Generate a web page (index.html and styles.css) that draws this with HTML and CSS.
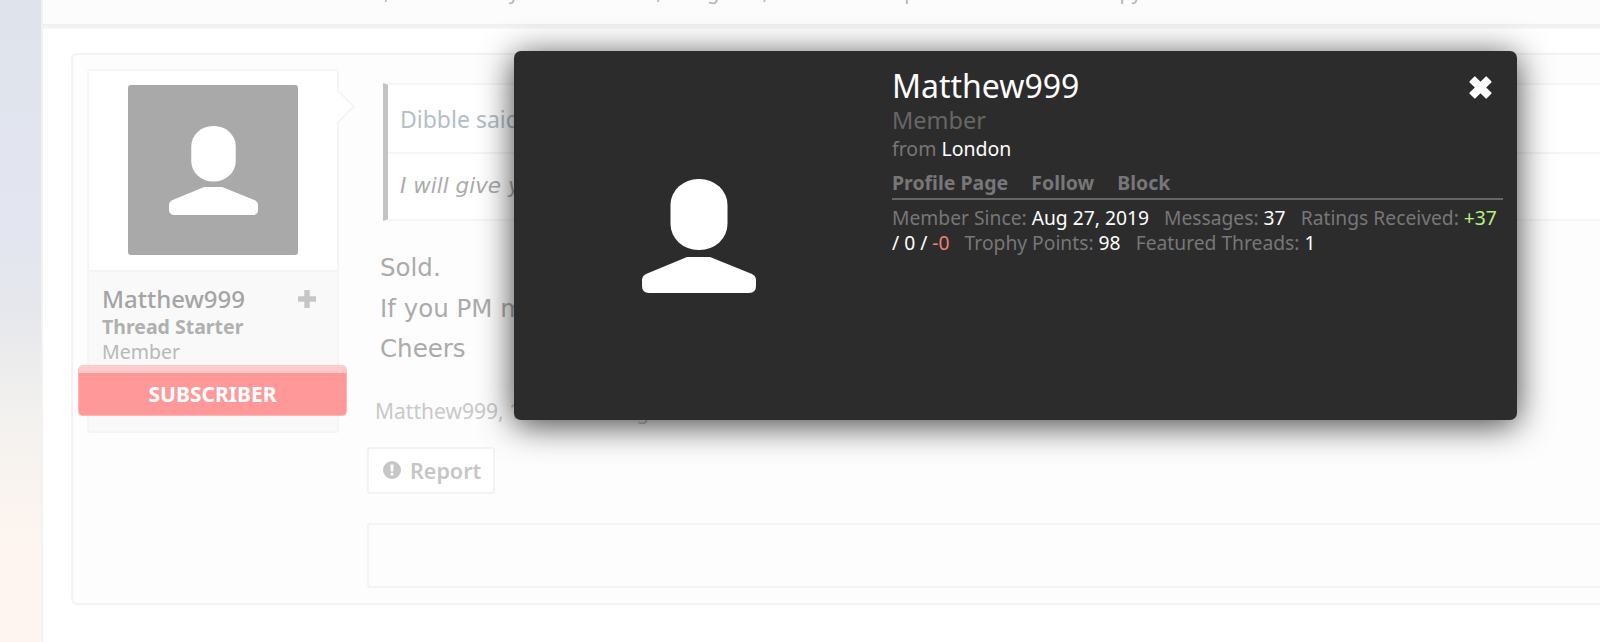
FILE: index.html
```html
<!DOCTYPE html>
<html lang="en">
  <head>
    <meta charset="UTF-8" />
    <title>Matthew999 - Thread</title>
    <link rel="stylesheet" href="styles.css">
  </head>
  <body>
    <svg class="icon-defs" width="0" height="0">
      <symbol id="person" viewBox="0 0 114 114">
        <rect x="28.5" y="0" width="57" height="71" rx="28" ry="26" />
        <path d="M45 78 H68 L110 95 Q114 97 114 101 V107 Q114 114 107 114 H7 Q0 114 0 107 V101 Q0 97 4 95 Z" />
      </symbol>
    </svg>

    <div class="page">
      <div class="gutter"></div>

      <div class="main">
        <div class="topbar"><p>Discussion in Gear For Sale, started by Matthew999, Aug 27, 2019 - Replies - Views - Copy</p></div>
        <div class="band"></div>

        <!-- Post -->
        <div class="panel">
          <div class="sidebar">
            <div class="avatar-wrap">
              <div class="avatar"><svg class="avatar-icon"><use href="#person" /></svg></div>
            </div>
            <div class="user-info">
              <div class="user-name">
                <span>Matthew999</span>
                <svg class="plus" viewBox="0 0 18 18"><path d="M6.3 0 H11.7 V6.3 H18 V11.7 H11.7 V18 H6.3 V11.7 H0 V6.3 H6.3 Z" /></svg>
              </div>
              <div class="user-starter">Thread Starter</div>
              <div class="user-role">Member</div>
            </div>
            <div class="subscriber">SUBSCRIBER</div>
            <div class="sidebar-end"></div>
          </div>

          <div class="post">
            <div class="quote">
              <div class="quote-head">Dibble said:</div>
              <div class="quote-body">I will give you</div>
            </div>
            <div class="message">
              <p>Sold.</p>
              <p>If you PM me</p>
              <p>Cheers</p>
            </div>
            <div class="post-date">Matthew999, 10 minutes ago</div>
            <div class="report">
              <svg class="report-icon" viewBox="0 0 18 18">
                <path fill-rule="evenodd" d="M9 0 A9 9 0 1 1 9 18 A9 9 0 1 1 9 0 Z M7.4 3.5 L7.8 10.5 H10.2 L10.6 3.5 Z M9 11.6 A1.6 1.6 0 1 0 9 14.8 A1.6 1.6 0 1 0 9 11.6 Z" />
              </svg>
              Report
            </div>
            <div class="reply-box"></div>
          </div>
        </div>
      </div>
    </div>

    <!-- Member overlay -->
    <div class="modal">
      <div class="modal-avatar"><svg class="modal-icon"><use href="#person" /></svg></div>
      <div class="modal-info">
        <h1>Matthew999</h1>
        <div class="modal-role">Member</div>
        <div class="modal-from">from <span class="val">London</span></div>
        <div class="modal-links">
          <span>Profile Page</span>
          <span>Follow</span>
          <span>Block</span>
        </div>
        <div class="modal-stats">
          <span class="stat">Member Since: <span class="val">Aug 27, 2019</span></span>
          <span class="stat">Messages: <span class="val">37</span></span>
          <span class="stat">Ratings Received: <span class="pos">+37</span> <span class="val">/ 0 /</span> <span class="neg">-0</span></span>
          <span class="stat">Trophy Points: <span class="val">98</span></span>
          <span class="stat">Featured Threads: <span class="val">1</span></span>
        </div>
      </div>
      <svg class="close" viewBox="0 0 22 22"><path d="M6 2 L11 7 L16 2 L20 6 L15 11 L20 16 L16 20 L11 15 L6 20 L2 16 L7 11 L2 6 Z" /></svg>
    </div>
  </body>
</html>
```

FILE: styles.css
```css
/* General Styles */
body {
  font-family: "Noto Sans", "Open Sans", sans-serif;
  margin: 0;
  padding: 0;
  background-color: #fff;
  overflow: hidden;
}

p {
  margin: 0;
}

.icon-defs {
  position: absolute;
}

.page {
  display: flex;
  height: 642px;
  overflow: hidden;
}

.gutter {
  width: 41px;
  flex-shrink: 0;
  border-right: 2px solid #f2f2f2;
  background: linear-gradient(#dfe3ec 0, #e3e6f0 36%, #e6e7ec 48%, #f4f2ef 66%, #fef5f0 85%, #fef5f0 100%);
}

.main {
  flex: 1;
  min-width: 0;
}

/* Top bar */
.topbar {
  height: 24px;
  background-color: #fcfcfc;
  overflow: hidden;
  white-space: nowrap;
}

.topbar p {
  margin-top: -22px;
  padding-left: 28px;
  font-size: 20px;
  line-height: 28px;
  word-spacing: 15px;
  color: #b5b5b5;
}

.band {
  height: 5px;
  background: linear-gradient(#efefef, #f7f7f7);
}

/* Panel */
.panel {
  display: flex;
  height: 519px;
  margin: 24px -20px 0 28px;
  padding: 14px 15px 15px 14px;
  background-color: #fdfdfd;
  border: 2px solid #f3f3f3;
  border-radius: 6px;
}

/* Sidebar */
.sidebar {
  position: relative;
  width: 248px;
  height: 360px;
  flex-shrink: 0;
  border: 2px solid #f5f5f5;
  border-radius: 3px;
  background-color: #f9f9f9;
}

.sidebar::after {
  content: "";
  position: absolute;
  top: 23px;
  right: -13px;
  width: 23px;
  height: 23px;
  background-color: #fff;
  border-top: 2px solid #f5f5f5;
  border-right: 2px solid #f5f5f5;
  transform: rotate(45deg);
}

.avatar-wrap {
  display: flex;
  justify-content: center;
  padding: 14px 0 15px;
  background-color: #fff;
  border-bottom: 2px solid #f3f3f3;
}

.avatar {
  display: flex;
  align-items: center;
  justify-content: center;
  width: 170px;
  height: 170px;
  background-color: #a9a9a9;
  border-radius: 3px;
}

.avatar-icon {
  width: 89px;
  height: 89px;
  fill: #fff;
}

.user-info {
  height: 93px;
  padding: 0 13px;
}

.user-name {
  display: flex;
  justify-content: space-between;
  align-items: center;
  padding-top: 11px;
  font-size: 24px;
  font-weight: 500;
  line-height: 31px;
  color: #a4a4a4;
}

.plus {
  width: 18px;
  height: 18px;
  margin-right: 8px;
  fill: #c6c6c6;
}

.user-starter {
  font-size: 19.5px;
  font-weight: 700;
  line-height: 25px;
  color: #b0b0b0;
}

.user-role {
  font-size: 19.5px;
  line-height: 25px;
  color: #b8b8b8;
}

.subscriber {
  position: relative;
  margin: 0 -10px 0 -11px;
  height: 42px;
  border: 1px solid #ffb5b5;
  border-top: 8px solid #ffcaca;
  border-radius: 5px;
  background-color: #ff9999;
  color: #fff;
  font-size: 21px;
  font-weight: 700;
  line-height: 42px;
  text-align: center;
}

.sidebar-end {
  height: 15px;
}

/* Post */
.post {
  flex: 1;
  margin-left: 28px;
  min-width: 0;
}

.quote {
  margin: 14px 0 0 16px;
  border: 2px solid #f5f5f5;
  border-left: 5px solid #c4c4c4;
  background-color: #fff;
}

.quote-head {
  height: 67px;
  padding-left: 12px;
  font-size: 23px;
  line-height: 68px;
  color: #b3bec8;
  border-bottom: 2px solid #f5f5f5;
}

.quote-body {
  height: 65px;
  padding-left: 12px;
  font-family: "DejaVu Sans", sans-serif;
  font-size: 21.5px;
  font-style: italic;
  line-height: 64px;
  color: #ababab;
}

.message {
  margin: 27px 0 0 13px;
  font-family: "DejaVu Sans", sans-serif;
  font-size: 24.5px;
  line-height: 40.5px;
  color: #ababab;
}

.post-date {
  margin: 26px 0 0 8px;
  font-size: 21px;
  line-height: 30px;
  color: #c9c9c9;
}

.report {
  display: inline-flex;
  align-items: center;
  gap: 9px;
  margin-top: 21px;
  height: 43px;
  padding: 0 12px 0 14px;
  border: 2px solid #f3f3f3;
  border-radius: 3px;
  background-color: #fff;
  font-size: 21.5px;
  font-weight: 600;
  color: #c6c6c6;
}

.report-icon {
  width: 18px;
  height: 18px;
  fill: #c6c6c6;
}

.reply-box {
  height: 61px;
  margin-top: 29px;
  border: 2px solid #f4f4f4;
  border-radius: 3px;
  background-color: #fdfdfd;
}

/* Member overlay */
.modal {
  position: absolute;
  top: 51px;
  left: 514px;
  display: flex;
  width: 1003px;
  height: 369px;
  background-color: #2c2c2c;
  border-radius: 7px;
  box-shadow: 0 5px 34px rgba(0, 0, 0, 0.75);
  color: #777;
}

.modal-avatar {
  display: flex;
  align-items: center;
  justify-content: center;
  width: 370px;
  flex-shrink: 0;
}

.modal-icon {
  width: 114px;
  height: 114px;
  fill: #fff;
}

.modal-info {
  flex: 1;
  margin: 0 14px 0 8px;
  min-width: 0;
}

.modal-info h1 {
  margin: 17px 0 0;
  font-size: 32px;
  font-weight: 400;
  line-height: 36px;
  color: #fff;
}

.modal-role {
  font-size: 23.5px;
  line-height: 32px;
  color: #666;
}

.modal-from {
  font-size: 19.5px;
  line-height: 25px;
}

.modal-links {
  display: flex;
  gap: 23px;
  margin-top: 8px;
  padding-bottom: 2px;
  border-bottom: 2px solid #666;
  font-size: 19.5px;
  font-weight: 700;
  line-height: 27px;
}

.modal-stats {
  margin-top: 6px;
  font-size: 19.25px;
  line-height: 24.5px;
}

.stat {
  margin-right: 10px;
}

.val {
  color: #fff;
}

.pos {
  color: #b5f37c;
}

.neg {
  color: #f08072;
}

.close {
  position: absolute;
  top: 24px;
  right: 24px;
  width: 25px;
  height: 25px;
  fill: #fff;
  stroke: #fff;
  stroke-width: 1.5;
  stroke-linejoin: round;
}
```
